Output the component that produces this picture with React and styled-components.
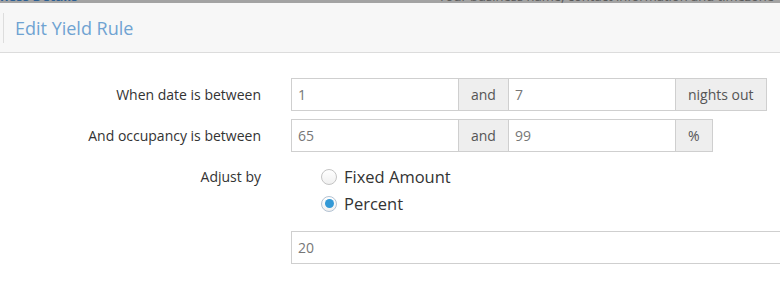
import React, { useState } from 'react';
import styled, { createGlobalStyle } from 'styled-components';

const GlobalStyle = createGlobalStyle`
  body {
    margin: 0;
    background: #fff;
    font-family: "Open Sans", "Liberation Sans", sans-serif;
  }
`;

const Page = styled.div`
  width: 780px;
  height: 282px;
  overflow: hidden;
  background: #fff;
`;

const BackStrip = styled.div`
  height: 3px;
  overflow: hidden;
  background: #a3a3a3;
  display: flex;
  justify-content: space-between;
  font-size: 13px;
  line-height: 16px;
`;

const BackText = styled.span`
  margin-top: -12px;
  color: ${(p) => (p.$link ? '#2c5f94' : '#5a5a5a')};
  font-weight: ${(p) => (p.$link ? 700 : 400)};
  white-space: nowrap;
  padding-right: ${(p) => (p.$link ? '0' : '6px')};
`;

const Header = styled.div`
  height: 49px;
  background: #f7f7f7;
  border-bottom: 1px solid #dcdcdc;
  display: flex;
  align-items: center;
  padding-left: 3px;
`;

const TitleWrap = styled.div`
  height: 30px;
  border-left: 1px solid #dddddd;
  display: flex;
  align-items: center;
  padding-left: 11px;
`;

const Title = styled.h4`
  margin: 0;
  font-size: 18px;
  font-weight: 400;
  color: #6fa3d2;
  white-space: nowrap;
`;

const Form = styled.div`
  display: grid;
  grid-template-columns: 261px 1fr;
  column-gap: 30px;
  row-gap: 8px;
  padding-top: 25px;
`;

const Label = styled.div`
  text-align: right;
  font-size: 14px;
  color: #333;
  line-height: ${(p) => p.$lh || '33px'};
  margin-top: ${(p) => p.$mt || '0'};
`;

const Group = styled.div`
  display: flex;
  height: 33px;
`;

const Field = styled.input`
  box-sizing: border-box;
  width: ${(p) => p.$w || '168px'};
  height: 33px;
  margin: 0 0 0 ${(p) => (p.$first ? '0' : '-1px')};
  padding: 0 6px;
  border: 1px solid #cfcfcf;
  border-radius: 0;
  font-family: inherit;
  font-size: 14px;
  color: #777;
  background: #fff;
  outline: none;
`;

const Addon = styled.span`
  box-sizing: border-box;
  height: 33px;
  margin-left: -1px;
  padding: 0 12px;
  border: 1px solid #cfcfcf;
  background: #eeeeee;
  color: #555;
  font-size: 14px;
  display: flex;
  align-items: center;
`;

const Radios = styled.div`
  padding-left: 30px;
  margin-top: 3px;
  display: flex;
  flex-direction: column;
`;

const RadioRow = styled.label`
  display: flex;
  align-items: center;
  height: 27px;
  gap: 7px;
  font-size: 16.5px;
  color: #333;
  cursor: pointer;
`;

const Circle = styled.span`
  box-sizing: border-box;
  width: 16px;
  height: 16px;
  border-radius: 50%;
  border: 1px solid ${(p) => (p.$on ? '#b4c3d3' : '#c4c4c4')};
  background: linear-gradient(#ffffff, #f0f0f0);
  display: flex;
  align-items: center;
  justify-content: center;
  &::after {
    content: '';
    width: 9px;
    height: 9px;
    border-radius: 50%;
    background: ${(p) => (p.$on ? '#3399d6' : 'transparent')};
  }
`;

const Wide = styled.div`
  margin-top: 6px;
  margin-right: -4px;
`;

export default function App() {
  const [mode, setMode] = useState('percent');

  return (
    <Page>
      <GlobalStyle />
      <BackStrip>
        <BackText $link>ness Details</BackText>
        <BackText>Your business name, contact information and timezone</BackText>
      </BackStrip>
      <Header>
        <TitleWrap>
          <Title>Edit Yield Rule</Title>
        </TitleWrap>
      </Header>
      <Form>
        <Label>When date is between</Label>
        <Group>
          <Field $first defaultValue="1" />
          <Addon>and</Addon>
          <Field defaultValue="7" />
          <Addon>nights out</Addon>
        </Group>

        <Label>And occupancy is between</Label>
        <Group>
          <Field $first defaultValue="65" />
          <Addon>and</Addon>
          <Field defaultValue="99" />
          <Addon>%</Addon>
        </Group>

        <Label $lh="27px" $mt="3px">Adjust by</Label>
        <Radios>
          <RadioRow onClick={() => setMode('fixed')}>
            <Circle $on={mode === 'fixed'} />
            Fixed Amount
          </RadioRow>
          <RadioRow onClick={() => setMode('percent')}>
            <Circle $on={mode === 'percent'} />
            Percent
          </RadioRow>
        </Radios>

        <span />
        <Wide>
          <Field $first $w="100%" defaultValue="20" />
        </Wide>
      </Form>
    </Page>
  );
}
